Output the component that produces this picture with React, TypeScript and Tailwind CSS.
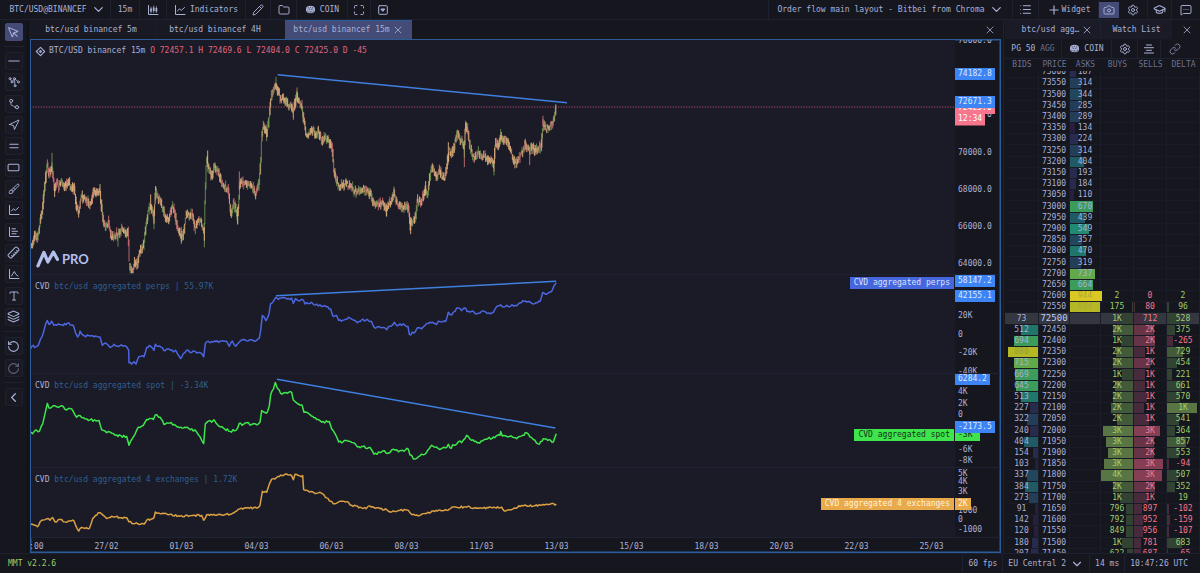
import React from "react";
import {
  Brush, Camera, ChevronDown, ChevronLeft, Folder, GraduationCap, Layers, Link, List,
  Maximize, MessageSquareMore, MousePointer, Navigation, Pencil, Plus, RectangleHorizontal, RotateCcw,
  RotateCw, Ruler, Settings, Type, X, Minus, Equal,
} from "lucide-react";

type Pt = [number, number];

const parse = (s: string, dx = 0): Pt[] =>
  s.trim().split(/\s+/).map((p) => {
    const [x, y] = p.split(",").map(Number);
    return [x + dx, y];
  });

const makeRandom = (seed: number) => () => {
  seed = (seed * 1664525 + 1013904223) % 4294967296;
  return seed / 4294967296;
};

const HALF = 810;

const PRICE: Pt[] = [
  ...parse(`4,560 8,555 15,525 22,535 30,495 38,450 45,370 52,310 57,340 66,320 74,385 80,360 86,385 95,360 103,378 108,375 117,365
  124,378 133,385 140,435 146,455 155,410 162,415 170,415 178,435 186,420 191,388 198,400 210,395 215,440 222,490 228,500 236,490
  245,530 252,530 262,520 275,508 286,512 295,525 299,615 304,635 310,625 315,605 322,615 328,575 335,570 342,545 350,490 356,450
  363,440 372,470 377,390 385,410 397,440 408,475 417,478 426,440 432,445 440,490 446,510 454,530 460,520 468,470 476,460 487,460
  496,505 505,485 515,490 523,520 526,400 530,300 537,330 545,345 553,315 565,335 575,370 583,380 595,385 600,440 604,465 612,430
  623,470 630,370 637,360 645,375 655,370 668,375 677,405 687,370 692,310 696,230 700,190 710,215 717,180 722,120 728,90 738,75
  746,95 752,115 762,115 775,130 783,135 790,155 796,125 801,100 808,125`),
  ...parse(`6,135 13,190 19,225 35,210 50,225 55,210 66,250 76,225 88,245 97,270 103,330 110,360 120,380 132,372 150,375 160,385 170,395
  187,385 200,392 214,405 222,430 235,430 248,430 258,450 266,435 275,425 282,400 292,435 303,435 312,445 322,435 327,455 332,500
  340,480 347,470 353,420 362,430 370,410 377,390 383,400 390,350 397,320 405,335 412,355 418,330 427,350 435,350 442,310 448,270
  455,280 463,260 472,220 480,235 488,250 493,260 497,195 503,210 510,260 518,285 527,290 535,275 545,290 555,285 565,300 575,300
  582,315 587,240 594,260 602,230 610,240 620,235 628,260 635,280 643,305 652,310 660,290 668,275 676,250 683,265 690,270 698,255
  706,270 715,260 724,260 729,190 740,205 750,200 760,185 766,160 769,140`, HALF),
];

const SPIKES: [number, number, number][] = [
  [66, 277, 340], [377, 378, 420], [533, 270, 310], [738, 48, 80], [801, 80, 120], [74, 370, 410], [264, 520, 560],
  [454, 500, 552], [623, 440, 493], [710, 200, 242], [790, 140, 178], [362, 402, 450], [372, 460, 507], [628, 333, 390], [523, 500, 542],
  [1307, 180, 220], [1303, 240, 320], [1142, 470, 522], [1412, 205, 250], [1392, 300, 334], [1255, 245, 300], [1282, 207, 240],
  [1499, 260, 314], [1069, 430, 468], [1092, 378, 410], [1539, 165, 200], [1187, 362, 400], [1486, 234, 270],
];

const PERPS: Pt[] = [
  ...parse(`2,235 10,225 14,232 25,225 32,205 40,188 47,160 52,150 57,162 65,152 72,165 85,160 100,165 112,158 130,165 137,188 143,200 148,192
  150,182 160,195 180,197 205,200 210,200 217,225 225,218 235,225 240,232 252,222 270,226 290,230 296,240 297,278 305,282 312,275
  318,282 326,260 333,258 342,260 350,232 362,228 372,240 376,222 385,228 397,232 405,242 417,236 430,245 437,240 445,255 452,265
  460,250 470,240 480,247 490,242 505,247 515,250 521,260 526,220 535,213 550,215 570,213 590,213 598,228 607,212 617,228 628,215
  637,208 650,212 665,208 680,210 688,203 692,180 697,135 708,150 717,130 722,98 730,92 737,80 745,86 760,80 775,83 785,82 790,98 797,83 805,90`),
  ...parse(`0,90 10,88 15,100 30,98 50,100 65,108 75,105 92,115 100,138 110,135 116,150 150,143 165,150 172,157 185,148 214,152 222,170 245,172
  260,178 270,167 283,155 295,165 310,160 324,168 328,192 345,185 352,172 365,175 375,165 390,155 410,162 415,152 437,153 445,125
  455,133 470,112 485,120 493,112 505,122 520,122 530,130 545,122 560,127 580,125 590,108 602,102 607,108 620,104 640,106 655,100
  668,90 685,92 700,100 720,92 728,65 740,70 755,62 762,45 769,35`, HALF),
];

const SPOT: Pt[] = [
  ...parse(`2,485 8,490 15,480 28,483 38,460 45,430 52,398 57,412 70,405 85,410 100,408 110,418 125,415 140,440 150,435 165,445 180,448 207,450
  215,478 225,482 240,485 255,495 290,498 297,525 305,508 315,492 325,470 340,465 350,447 370,447 376,433 390,440 402,462 420,458
  440,468 460,473 485,475 500,485 515,510 521,520 526,460 535,452 545,455 552,448 562,462 580,473 600,483 618,480 628,458 640,462
  650,457 665,462 680,463 690,455 695,420 710,428 718,405 722,372 730,355 736,335 742,352 752,368 785,365 790,388 805,400`),
  ...parse(`0,403 6,403 12,425 30,432 50,447 65,455 88,453 95,475 105,490 116,515 150,513 165,520 172,530 210,532 222,552 245,545 270,547
  280,537 295,545 325,537 330,555 345,567 360,557 375,552 395,525 410,530 420,538 440,532 445,522 450,533 462,525 475,515 485,517
  500,495 515,510 535,517 560,507 580,500 600,495 602,483 607,497 630,498 650,505 668,495 680,487 690,500 705,510 718,522 730,505
  748,508 760,515 769,490`, HALF),
];

const EXCHANGES: Pt[] = [
  ...parse(`2,762 12,765 22,770 30,755 45,748 55,745 60,750 68,742 75,755 90,748 105,755 120,752 132,752 138,768 146,783 155,772 165,775 178,775
  188,745 205,727 220,735 230,745 245,738 270,742 290,742 297,755 315,760 342,762 350,750 372,742 376,725 390,730 420,732 450,738
  480,736 515,735 521,750 530,733 560,735 600,732 620,722 630,715 650,713 680,713 690,705 697,662 710,665 718,640 725,625 740,620
  765,610 785,615 790,627 795,610 805,614`),
  ...parse(`0,615 8,614 11,657 50,668 60,665 80,682 100,700 115,695 145,695 155,705 180,710 198,715 205,707 240,715 260,718 275,725 300,720
  325,720 332,730 355,737 400,722 440,720 460,710 500,710 545,713 605,710 613,722 635,718 665,705 700,707 730,702 769,701`, HALF),
];

function jitteredPath(points: Pt[], amount: number, seed: number) {
  const rnd = makeRandom(seed);
  const out: string[] = [];
  points.forEach(([x, y], i) => {
    out.push(`${x},${y}`);
    const next = points[i + 1];
    if (!next) return;
    const steps = Math.floor((next[0] - x) / 4);
    for (let k = 1; k < steps; k++) {
      const t = k / steps;
      out.push(`${(x + (next[0] - x) * t).toFixed(1)},${(y + (next[1] - y) * t + (rnd() - 0.5) * amount).toFixed(1)}`);
    }
  });
  return out.join(" ");
}

function candlePaths() {
  const rnd = makeRandom(11);
  let up = "";
  let down = "";
  let flat = "";
  for (let i = 0; i < PRICE.length - 1; i++) {
    const [x0, y0] = PRICE[i];
    const [x1, y1] = PRICE[i + 1];
    const n = Math.max(1, Math.round((x1 - x0) / 2));
    const drift = (y1 - y0) / (x1 - x0);
    for (let k = 0; k < n; k++) {
      const t = k / n;
      const x = x0 + (x1 - x0) * t;
      const slope = Math.abs((y1 - y0) / n) / 2;
      const mid = y0 + (y1 - y0) * t + (rnd() - 0.5) * 15;
      const hi = Math.max(mid - 3 - slope - rnd() * 11, 40);
      const lo = Math.min(mid + 3 + slope + rnd() * 11, 640);
      const seg = `M${x.toFixed(1)} ${hi.toFixed(1)}V${lo.toFixed(1)}`;
      const pick = rnd();
      if (pick < 0.5) flat += seg;
      else if (pick < (drift < -4 ? 0.9 : drift > 4 ? 0.55 : 0.75)) up += seg;
      else down += seg;
    }
  }
  SPIKES.forEach(([x, a, b], i) => {
    const seg = `M${x} ${a}V${b}`;
    if (i % 3 === 1) down += seg;
    else if (i % 3 === 2) flat += seg;
    else up += seg;
  });
  return { up, down, flat };
}

const candles = candlePaths();

type Mark = { text: string; at: number; tag?: string };

const ticks = (items: [string, number][]): Mark[] => items.map(([text, at]) => ({ text, at }));

function Pane({ viewBox, marks, children, legend, badge }: {
  viewBox: string; marks: Mark[]; children: React.ReactNode; legend: React.ReactNode;
  badge?: { text: string; at: number; tone: string };
}) {
  return (
    <section className="flex min-h-0 border-b border-[#1e2233]">
      <div className="relative min-w-0 flex-1 bg-[#1a1b26]">
        <svg viewBox={viewBox} preserveAspectRatio="none" className="absolute inset-0 h-full w-full" fill="none">{children}</svg>
        {legend}
        {badge && (
          <span className={`absolute right-px -translate-y-1/2 px-1 leading-3 ${badge.tone}`} style={{ top: `${badge.at}%` }}>{badge.text}</span>
        )}
      </div>
      <div className="relative w-[45px] shrink-0 overflow-hidden">
        {marks.map((m) => (
          <span key={m.text} className={`absolute left-0 -translate-y-1/2 whitespace-pre leading-3 ${m.tag ? `px-[3px] ${m.tag}` : "pl-[3px]"}`} style={{ top: `${m.at}%` }}>{m.text}</span>
        ))}
      </div>
    </section>
  );
}

function Legend({ text }: { text: string }) {
  return <p className="relative px-1 pt-[6px] leading-3 whitespace-pre"><span>CVD</span><span className="text-[#2f5f91]"> {text}</span></p>;
}

const blueTag = "bg-[#3d84f5] text-[#dfe8ff] z-10";

const CoinIcon = () => (
  <svg viewBox="0 0 12 10" className="h-[9px] w-[11px]" aria-hidden="true">
    <path d="M1 4.2C1 2 3 .8 6 .8s5 1.2 5 3.4v1.6C11 8 9 9.2 6 9.2S1 8 1 5.8z" fill="#a9b1d6" />
    <path d="M3 3.2h1.5M5.5 2.6h1M7.5 3.2H9M4 4.8h1.6M6.6 4.8h1.6M2 6.2l1 .8M4.4 7v1.2M6 7v1.4M7.6 7v1.2M10 6.2l-1 .8" stroke="#1a1b26" strokeWidth=".7" />
  </svg>
);

const strokeProps = { fill: "none", stroke: "currentColor", strokeWidth: 1, strokeLinecap: "round" as const, strokeLinejoin: "round" as const };

const CandlesIcon = () => (
  <svg viewBox="0 0 12 12" className="size-3" {...strokeProps}><path d="M1.5 1.5v9H11" /><path d="M4 4.500v3M6.700 3.500v3.500M9.400 4v3.500" strokeWidth="1.8" strokeLinecap="butt" /><path d="M4 3v6M6.7 2v6.500M9.400 2.500v6" strokeWidth=".7" /></svg>
);
const PatternIcon = () => (
  <svg viewBox="0 0 12 12" className="size-3" {...strokeProps} strokeWidth=".9"><circle cx="2" cy="2.600" r="1" /><circle cx="6.400" cy="2.600" r="1" /><circle cx="10.400" cy="6" r="1" /><circle cx="4" cy="6" r="1" /><circle cx="7" cy="9.800" r="1" /><path d="M2.600 3.500l.8 1.500M5.800 3.500l-1 1.500M6.600 3.700l.3 5M7.300 3.200l2.200 2" /></svg>
);
const PathIcon = () => (
  <svg viewBox="0 0 12 12" className="size-3" {...strokeProps}><circle cx="3.200" cy="2.800" r="1.500" /><circle cx="9" cy="9.200" r="1.600" /><path d="M3 4.400c-.4 2 0 3.200 1.600 3.200 1.400 0 1.200 1.800 2.600 1.800" /></svg>
);
const BoxMenuIcon = () => (
  <svg viewBox="0 0 12 12" className="size-3" {...strokeProps}><rect x="1.700" y="1.700" width="8.600" height="8.600" rx=".8" /><path d="M4.200 5h3.600L6 7.200z" fill="currentColor" /></svg>
);
const AxisIcon = ({ d }: { d: string }) => (
  <svg viewBox="0 0 12 12" className="size-3" {...strokeProps}><path d="M1.500 1.500v9H11" /><path d={d} /></svg>
);

const TREND = "M3.500 7l2-2.200 1.800 1.600 3.200-2.900";

const ic = { size: 13, strokeWidth: 1.9 };

const tools: [string, React.ReactNode][] = [
  ["Line", <Minus className="size-[18px]" strokeWidth={1.5} />],
  ["Pattern", <PatternIcon />],
  ["Path", <PathIcon />],
  ["Arrow", <Navigation {...ic} size={12} />],
  ["Parallel", <Equal {...ic} size={14} />],
  ["Rectangle", <RectangleHorizontal {...ic} />],
  ["Brush", <Brush {...ic} size={12} />],
  ["Trend", <AxisIcon d={TREND} />],
  ["Profile", <AxisIcon d="M4 2.800h3.400M4 5.300h5.500M4 7.800h4" />],
  ["Measure", <Ruler {...ic} className="rotate-90" />],
  ["Anchored", <AxisIcon d="M3.500 8l2.800-4.500L8 6.500l2 1.500" />],
  ["Text", <Type {...ic} size={12} />],
  ["Layers", <Layers {...ic} />],
];

function ToolButton({ label, children, active, faded }: { label: string; children: React.ReactNode; active?: boolean; faded?: boolean }) {
  return (
    <button aria-label={label} className={`flex size-[18px] items-center justify-center rounded-xs border ${active ? "border-[#434b76] bg-[#434b76]" : "border-[#1e2130] bg-[#181922]"}`}>
      <span className={faded ? "opacity-50" : ""}>{children}</span>
    </button>
  );
}

const barBtn = "flex h-full shrink-0 items-center justify-center border-r border-[#1e2130]";

const rows: (string | number)[][] = [
  ["", 73600, 187], ["", 73550, 314], ["", 73500, 344], ["", 73450, 285], ["", 73400, 289], ["", 73350, 134], ["", 73300, 224],
  ["", 73250, 314], ["", 73200, 404], ["", 73150, 193], ["", 73100, 184], ["", 73050, 110], ["", 73000, 670], ["", 72950, 439],
  ["", 72900, 549], ["", 72850, 357], ["", 72800, 470], ["", 72750, 319], ["", 72700, 737], ["", 72650, 664],
  ["", 72600, 944, "2", "0", 2, 0, 0], ["", 72550, 884, "175", "80", 96, 1, 1],
  [73, 72500, "", "1K", "712", 528, 11, 8], [512, 72450, "", "2K", "2K", 375, 20, 20], [694, 72400, "", "1K", "2K", -265, 12, 21],
  [880, 72350, "", "2K", "1K", 729, 17, 11], [715, 72300, "", "2K", "2K", 454, 20, 16], [669, 72250, "", "1K", "1K", 221, 11, 11],
  [645, 72200, "", "2K", "1K", 661, 18, 11], [513, 72150, "", "2K", "1K", 570, 20, 13], [227, 72100, "", "2K", "1K", 1370, 22, 10],
  [322, 72050, "", "2K", "1K", 541, 16, 15], [240, 72000, "", "3K", "3K", 364, 30, 26], [404, 71950, "", "3K", "2K", 857, 27, 20],
  [154, 71900, "", "3K", "2K", 553, 25, 20], [103, 71850, "", "3K", "3K", -94, 29, 29], [337, 71800, "", "4K", "3K", 507, 32, 28],
  [384, 71750, "", "2K", "2K", 352, 20, 21], [273, 71700, "", "1K", "1K", 19, 13, 14], [91, 71650, "", "796", "897", -102, 7, 8],
  [142, 71600, "", "792", "952", -159, 7, 9], [120, 71550, "", "849", "956", -107, 7, 9], [180, 71500, "", "1K", "781", 683, 11, 7],
  [207, 71450, "", "622", "687", -65, 6, 7],
];

const heat = (v: number) =>
  v < 150 ? "bg-[#281f3d]" : v < 260 ? "bg-[#282b4e]" : v < 330 ? "bg-[#243d58]" : v < 380 ? "bg-[#22465b]" : v < 460 ? "bg-[#205b65]"
    : v < 530 ? "bg-[#20766b]" : v < 600 ? "bg-[#228a70]" : v < 700 ? "bg-[#3c9c5c]" : v < 800 ? "bg-[#62a94c]" : v < 900 ? "bg-[#b3b824]" : "bg-[#d9c922]";

const tint = (w: number, up: boolean) =>
  up
    ? w > 24 ? "bg-[#5a7544]" : w > 15 ? "bg-[#435a3a]" : "bg-[#324233]"
    : w > 24 ? "bg-[#843f54]" : w > 15 ? "bg-[#663446]" : "bg-[#472a3b]";

function Cell({ value, width = 0, bar = "", right, tone = "" }: { value: string | number; width?: number; bar?: string; right?: boolean; tone?: string }) {
  return (
    <td className={`relative flex items-center justify-center border-r border-[#1b1d29] leading-none ${tone}`}>
      {width > 0 && <span className={`absolute inset-y-0 ${right ? "right-0" : "left-0"} ${bar}`} style={{ width }} />}
      <span className="relative">{value}</span>
    </td>
  );
}

const cols = "grid grid-cols-[34fr_31fr_31fr_33fr_33fr_33fr]";

function OrderBook() {
  return (
    <table className="flex min-h-0 flex-1 flex-col overflow-hidden">
      <thead className="relative z-10 h-3 shrink-0 bg-[#16161e] text-[#6b7190]">
        <tr className={`h-full ${cols}`}>
          {["BIDS", "PRICE", "ASKS", "BUYS", "SELLS", "DELTA"].map((h) => <th key={h} className="text-center font-normal leading-3">{h}</th>)}
        </tr>
      </thead>
      <tbody className="-mt-1 -mb-[7px] flex min-h-0 flex-1 flex-col">
        {rows.map(([bid, price, ask, buys = "", sells = "", delta = "", bw = 0, sw = 0]) => {
          const d = Number(delta);
          const dw = Math.round(Math.abs(d) * 0.022);
          const now = price === 72500;
          return (
            <tr key={price} className={`min-h-0 flex-1 border-b border-[#191b26] ${cols} ${now ? "bg-[#34373f]" : ""}`}>
              <Cell value={bid} width={bid && !now ? Number(bid) * 0.034 : 0} bar={heat(Number(bid))} right tone={Number(bid) > 800 ? "text-[#96a03a]" : ""} />
              <Cell value={price} tone={now ? "text-[9px] text-[#c0caf5]" : ""} />
              <Cell value={ask} width={Number(ask) * 0.034} bar={heat(Number(ask))} tone={Number(ask) > 800 ? "text-[#b0a63a]" : ""} />
              <Cell value={buys} width={Number(bw)} bar={tint(Number(bw), true)} right tone="text-[#9ece6a]" />
              <Cell value={sells} width={Number(sw)} bar={tint(Number(sw), false)} tone="text-[#f7768e]" />
              <Cell value={d > 1000 ? "1K" : delta} width={dw} bar={tint(dw, d > 0)} tone={d < 0 ? "text-[#f7768e]" : "text-[#9ece6a]"} />
            </tr>
          );
        })}
      </tbody>
    </table>
  );
}

const dates = ["12:00", "27/02", "01/03", "04/03", "06/03", "08/03", "11/03", "13/03", "15/03", "18/03", "20/03", "22/03", "25/03"];

export default function App() {
  return (
    <div className="flex h-screen flex-col overflow-hidden bg-[#16161e] font-['DejaVu_Sans_Mono','Liberation_Mono',monospace] text-[8px] leading-3 text-[#a9b1d6]">
      <header className="flex h-5 shrink-0 items-center border-b border-[#1e2130]">
        <button className={`${barBtn} w-[111px] gap-1 pl-[5px]`}>BTC/USD@BINANCEF <ChevronDown size={15} /></button>
        <button className={`${barBtn} w-[29px]`}>15m</button>
        <button aria-label="Chart type" className={`${barBtn} w-[27px]`}><CandlesIcon /></button>
        <button className={`${barBtn} w-[79px] gap-1`}><AxisIcon d={TREND} />Indicators</button>
        <button aria-label="Draw" className={`${barBtn} w-[25px]`}><Pencil {...ic} size={12} /></button>
        <button aria-label="Open" className={`${barBtn} w-[26px]`}><Folder {...ic} size={12} /></button>
        <button className={`${barBtn} w-[51px] gap-1`}><CoinIcon />COIN</button>
        <button aria-label="Fullscreen" className={`${barBtn} w-[23px]`}><Maximize {...ic} size={12} /></button>
        <button aria-label="More" className="flex w-[23px] items-center justify-center"><BoxMenuIcon /></button>
        <div className="ml-auto flex h-full items-center">
          <button className={`${barBtn} w-[245px] gap-1 border-l`}>Order flow main layout - Bitbei from Chroma <ChevronDown size={15} /></button>
          <button aria-label="List" className={`${barBtn} w-[26px]`}><List {...ic} /></button>
          <button className={`${barBtn} w-[60px] gap-px`}><Plus size={14} />Widget</button>
          <button aria-label="Screenshot" className="flex h-4 w-5 items-center justify-center bg-[#434b76]"><Camera {...ic} size={12} /></button>
          <button aria-label="Settings" className={`${barBtn} w-[29px]`}><Settings {...ic} size={12} /></button>
          <button aria-label="Learn" className={`${barBtn} w-[24px]`}><GraduationCap {...ic} /></button>
          <button aria-label="Chat" className="flex w-7 items-center justify-center"><MessageSquareMore {...ic} size={12} /></button>
        </div>
      </header>

      <div className="flex min-h-0 flex-1">
        <nav aria-label="Drawing tools" className="flex w-7 shrink-0 flex-col items-center gap-[5px] border-r border-[#0f1017] pt-[3px]">
          <ToolButton label="Cursor" active><MousePointer {...ic} /></ToolButton>
          <hr className="w-5 border-[#1e2130]" />
          <div className="flex h-[274px] flex-col justify-between">
            {tools.map(([label, icon]) => <ToolButton key={label} label={label}>{icon}</ToolButton>)}
          </div>
          <hr className="w-5 border-[#1e2130]" />
          <div className="flex h-10 flex-col justify-between">
            <ToolButton label="Undo"><RotateCcw {...ic} /></ToolButton>
            <ToolButton label="Redo" faded><RotateCw {...ic} /></ToolButton>
          </div>
          <hr className="w-5 border-[#1e2130]" />
          <ToolButton label="Collapse"><ChevronLeft {...ic} size={15} /></ToolButton>
        </nav>

        <main className="ml-[2px] flex min-w-0 flex-1 flex-col">
          <div role="tablist" className="flex h-[19px] shrink-0 items-stretch">
            <button role="tab" className="w-[127px] border-r border-[#1b1d29] bg-[#181922] pr-1 text-center">btc/usd binancef 5m</button>
            <button role="tab" className="w-[128px] bg-[#181922] pr-5 pl-2 text-center">btc/usd binancef 4H</button>
            <button role="tab" aria-selected="true" className="flex w-[127px] items-center justify-center gap-[2px] border-t border-[#2b5c98] bg-[#434b76]">btc/usd binancef 15m <X size={12} strokeWidth={1.6} /></button>
            <button aria-label="Close panel" className="ml-auto px-[5px]"><X size={12} strokeWidth={1.6} /></button>
          </div>
          <div className="grid min-h-0 flex-1 grid-cols-1 grid-rows-[235fr_99fr_94fr_70fr_14px] border border-[#2b5c98] ring-1 ring-[#1c3a60] ring-inset">
            <Pane
              viewBox="3 -63 2772 705"
              marks={[
                ...ticks([["76000.0", 0.6], ["72000.0", 32.2], ["70000.0", 48.2], ["68000.0", 63.9], ["66000.0", 79.8], ["64000.0", 95.6]]),
                { text: "72425.0", at: 29, tag: "bg-[#f7768e] text-white" },
                { text: "12:34", at: 33.6, tag: "bg-[#f7768e] text-white pb-px" },
                { text: "74182.8", at: 14.7, tag: blueTag },
                { text: "72671.3", at: 26.6, tag: blueTag },
              ]}
              legend={
                <>
                  <p className="relative flex items-center gap-[3px] px-1 pt-[5px] whitespace-pre">
                    <svg viewBox="0 0 12 12" className="size-[11px]" {...strokeProps} strokeWidth="1.2"><path d="M4 3.500L6 1.500l2 2M4 8.500l2 2 2-2M3.500 4l-2 2 2 2M8.500 4l2 2-2 2M6 5l1 1-1 1-1-1z" /></svg>
                    <span>BTC/USD binancef 15m <span className="text-[#e0667f]">O 72457.1 H 72469.6 L 72404.0 C 72425.0 D -45</span></span>
                  </p>
                  <div className="absolute bottom-[6px] left-[5px] flex items-center gap-[3px] font-['Lato',sans-serif] text-[13px] font-bold text-[#b4bfee]">
                    <svg viewBox="0 0 70 54" className="h-[18px] w-[23px]" fill="none" stroke="currentColor" strokeWidth="10" strokeLinecap="round" strokeLinejoin="round"><path d="M6 48L24 7L36 36L53 6L65 28" /></svg>
                    <span>PRO</span>
                  </div>
                </>
              }
            >
              <path d="M0 139H2775" stroke="#d4526c" strokeWidth="3" strokeDasharray="4 4" opacity=".8" />
              <path d={candles.down} stroke="#ee7f83" strokeWidth="2.5" opacity=".9" />
              <path d={candles.up} stroke="#86b45c" strokeWidth="2.5" opacity=".85" />
              <path d={candles.flat} stroke="#dfae7c" strokeWidth="2.8" />
              <path d="M743 42L1611 126" stroke="#3f7fdf" strokeWidth="4.5" />
            </Pane>
            <Pane
              viewBox="3 12 2772 297"
              marks={[
                ...ticks([["20K", 42], ["0", 61], ["-20K", 80], ["-40K", 98.5]]),
                { text: "58147.2", at: 6, tag: blueTag },
                { text: "42155.1", at: 21.5, tag: blueTag },
              ]}
              badge={{ text: "CVD aggregated perps", at: 8, tone: "bg-[#4566dd] text-[#dbe3ff]" }}
              legend={<Legend text="btc/usd aggregated perps | 55.97K" />}
            >
              <polyline points={jitteredPath(PERPS, 8, 3)} stroke="#4c66e0" strokeWidth="4.5" strokeLinejoin="round" />
              <path d="M738 75L1578 31" stroke="#3f7fdf" strokeWidth="4.5" />
            </Pane>
            <Pane
              viewBox="3 309 2772 282"
              marks={[
                ...ticks([["4K", 19], ["2K", 32], ["0", 44.5], ["-4K", 70], ["-6K", 82], ["-8K", 94]]),
                { text: "-3K ", at: 65.5, tag: "bg-[#3fe34c] text-[#14351a]" },
                { text: "6284.2", at: 5.5, tag: blueTag },
                { text: "-2173.5", at: 57, tag: blueTag },
              ]}
              badge={{ text: "CVD aggregated spot", at: 65.5, tone: "bg-[#3fe34c] text-[#14351a]" }}
              legend={<Legend text="btc/usd aggregated spot | -3.34K" />}
            >
              <polyline points={jitteredPath(SPOT, 8, 5)} stroke="#3ee64b" strokeWidth="4.5" strokeLinejoin="round" />
              <path d="M741 325L1576 473" stroke="#3f7fdf" strokeWidth="4.5" />
            </Pane>
            <Pane
              viewBox="3 591 2772 210"
              marks={[
                ...ticks([["5K", 8], ["4K", 21], ["3K", 35], ["1000", 62], ["0", 76], ["-1000", 90]]),
                { text: "2K", at: 52, tag: "bg-[#e8aa4a] text-[#fff3dc] z-10" },
              ]}
              badge={{ text: "CVD aggregated 4 exchanges", at: 52, tone: "bg-[#e8aa4a] text-[#fff3dc]" }}
              legend={<Legend text="btc/usd aggregated 4 exchanges | 1.72K" />}
            >
              <polyline points={jitteredPath(EXCHANGES, 6, 9)} stroke="#dba044" strokeWidth="4.5" strokeLinejoin="round" />
            </Pane>
            <div className="flex overflow-hidden">
              <div className="-ml-[37px] flex">
                {dates.map((d) => <span key={d} className="w-[75px] shrink-0 pt-[3px] text-center leading-3">{d}</span>)}
              </div>
            </div>
          </div>
        </main>

        <aside className="ml-[2px] flex w-[197px] shrink-0 flex-col border-l border-[#1e2130] pl-px text-[#a9b1d6]">
          <div role="tablist" className="flex h-[19px] shrink-0 items-stretch">
            <button role="tab" aria-selected="true" className="flex w-[95px] items-center justify-center gap-[2px] bg-[#1a1b26] pl-[10px]">btc/usd agg… <X size={12} strokeWidth={1.6} /></button>
            <button role="tab" className="w-[72px] border-l border-[#1e2130] bg-[#1a1b26]">Watch List</button>
            <button aria-label="Close list" className="ml-auto px-[7px]"><X size={12} strokeWidth={1.6} /></button>
          </div>
          <div className="flex h-5 shrink-0 items-stretch border-b border-[#1e2130]">
            <button className="w-[57px] border-r border-[#1e2130] whitespace-pre">PG 50 <span className="text-[#6b7190]">AGG</span></button>
            <button className="flex w-[50px] items-center justify-center gap-1 border-r border-[#1e2130]"><CoinIcon />COIN</button>
            <button aria-label="Book settings" className="flex w-[26px] items-center justify-center border-r border-[#1e2130]"><Settings {...ic} size={12} /></button>
            <button aria-label="Center" className="flex w-[23px] items-center justify-center border-r border-[#1e2130]">
              <svg viewBox="0 0 12 12" className="size-3" {...strokeProps}><path d="M3.500 2h5M1.500 4.700h9M3.500 7.300h5M1.500 10h9" /></svg>
            </button>
            <button aria-label="Link" className="flex w-[28px] items-center justify-center text-[#7c83a3]"><Link {...ic} size={12} /></button>
          </div>
          <OrderBook />
        </aside>
      </div>

      <footer className="flex h-5 shrink-0 items-center border-t border-[#1e2130]">
        <span className="px-2 text-[#9ece6a]">MMT v2.2.6</span>
        <span className="ml-auto border-x border-[#1e2130] px-[5px] leading-[18px]">60 fps</span>
        <button className="flex items-center gap-1 px-[5px]">EU Central 2 <ChevronDown size={14} /></button>
        <span className="border-x border-[#1e2130] px-[5px] leading-[18px]">14 ms</span>
        <time className="pr-3 pl-[5px]">10:47:26 UTC</time>
      </footer>
    </div>
  );
}
